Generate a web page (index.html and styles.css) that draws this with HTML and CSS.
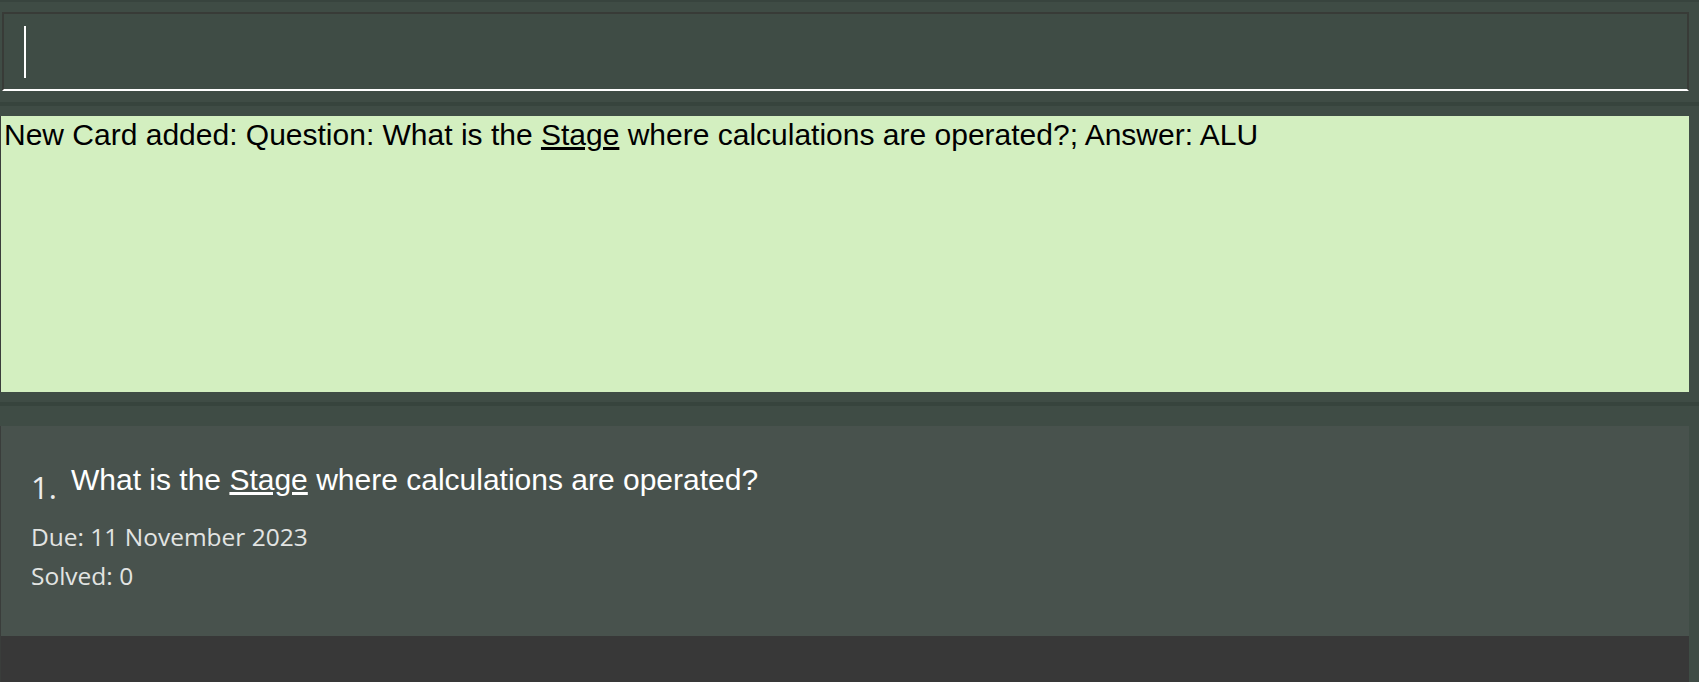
FILE: index.html
```html
<!DOCTYPE html>
<html>
<head>
<meta charset="utf-8">
<link rel="stylesheet" href="styles.css">
</head>
<body>
<div class="app">
  <div class="top-strip"></div>
  <section class="command">
    <div class="command-box"><span class="caret"></span></div>
  </section>
  <div class="divider"></div>
  <section class="result">
    <div class="result-box">New Card added: Question: What is the <u>Stage</u> where calculations are operated?; Answer: ALU</div>
  </section>
  <div class="divider"></div>
  <section class="list">
    <div class="list-view">
      <div class="card">
        <div class="card-head">
          <span class="card-index">1.</span>
          <span class="card-question">What is the <u>Stage</u> where calculations are operated?</span>
        </div>
        <div class="card-meta">Due: 11 November 2023</div>
        <div class="card-meta">Solved: 0</div>
      </div>
    </div>
  </section>
</div>
</body>
</html>
```
FILE: styles.css
```css
html, body {
  margin: 0;
  padding: 0;
  background: #3f4c45;
  height: 100%;
  overflow: hidden;
}
.app {
  display: flex;
  flex-direction: column;
  height: 682px;
}
.top-strip {
  height: 2px;
  background: #38443e;
}
.command {
  padding: 10px 10px 11px 2px;
}
.command-box {
  height: 75px;
  border: 2px solid #383b37;
  border-bottom: 2px solid #ffffff;
  padding-left: 20px;
  display: flex;
  align-items: flex-start;
}
.caret {
  display: block;
  width: 2px;
  height: 52px;
  margin-top: 12px;
  background: #ffffff;
}
.divider {
  height: 4px;
  background: #37443d;
}
.result {
  padding: 10px 10px 10px 0;
}
.result-box {
  height: 274px;
  border-left: 1px solid #3a3d3b;
  background: #d3efc0;
  padding: 2px 0 0 3px;
  font-family: "Liberation Sans", Arial, sans-serif;
  font-size: 30px;
  color: #000000;
  line-height: 34px;
}
.list {
  flex: 1;
  display: flex;
  padding: 20px 10px 0 0;
  min-height: 0;
}
.list-view {
  flex: 1;
  border-left: 1px solid #3a3d3b;
  background: #383838;
}
.card {
  height: 210px;
  box-sizing: border-box;
  background: #48524d;
  padding: 37px 0 0 30px;
}
.card-head {
  display: flex;
  align-items: flex-start;
}
.card-index {
  font-family: "Open Sans", "Noto Sans", sans-serif;
  font-size: 31px;
  font-weight: 500;
  color: #ececec;
  line-height: 40px;
  margin-top: 4px;
  width: 40px;
  flex-shrink: 0;
}
.card-question {
  font-family: "Liberation Sans", Arial, sans-serif;
  font-size: 30px;
  line-height: 34px;
  color: #ffffff;
}
.card-meta {
  font-family: "Open Sans", "Noto Sans", sans-serif;
  font-size: 24.5px;
  line-height: 39px;
  color: #e2e4e2;
}
.card-head + .card-meta {
  margin-top: 10px;
}
```
